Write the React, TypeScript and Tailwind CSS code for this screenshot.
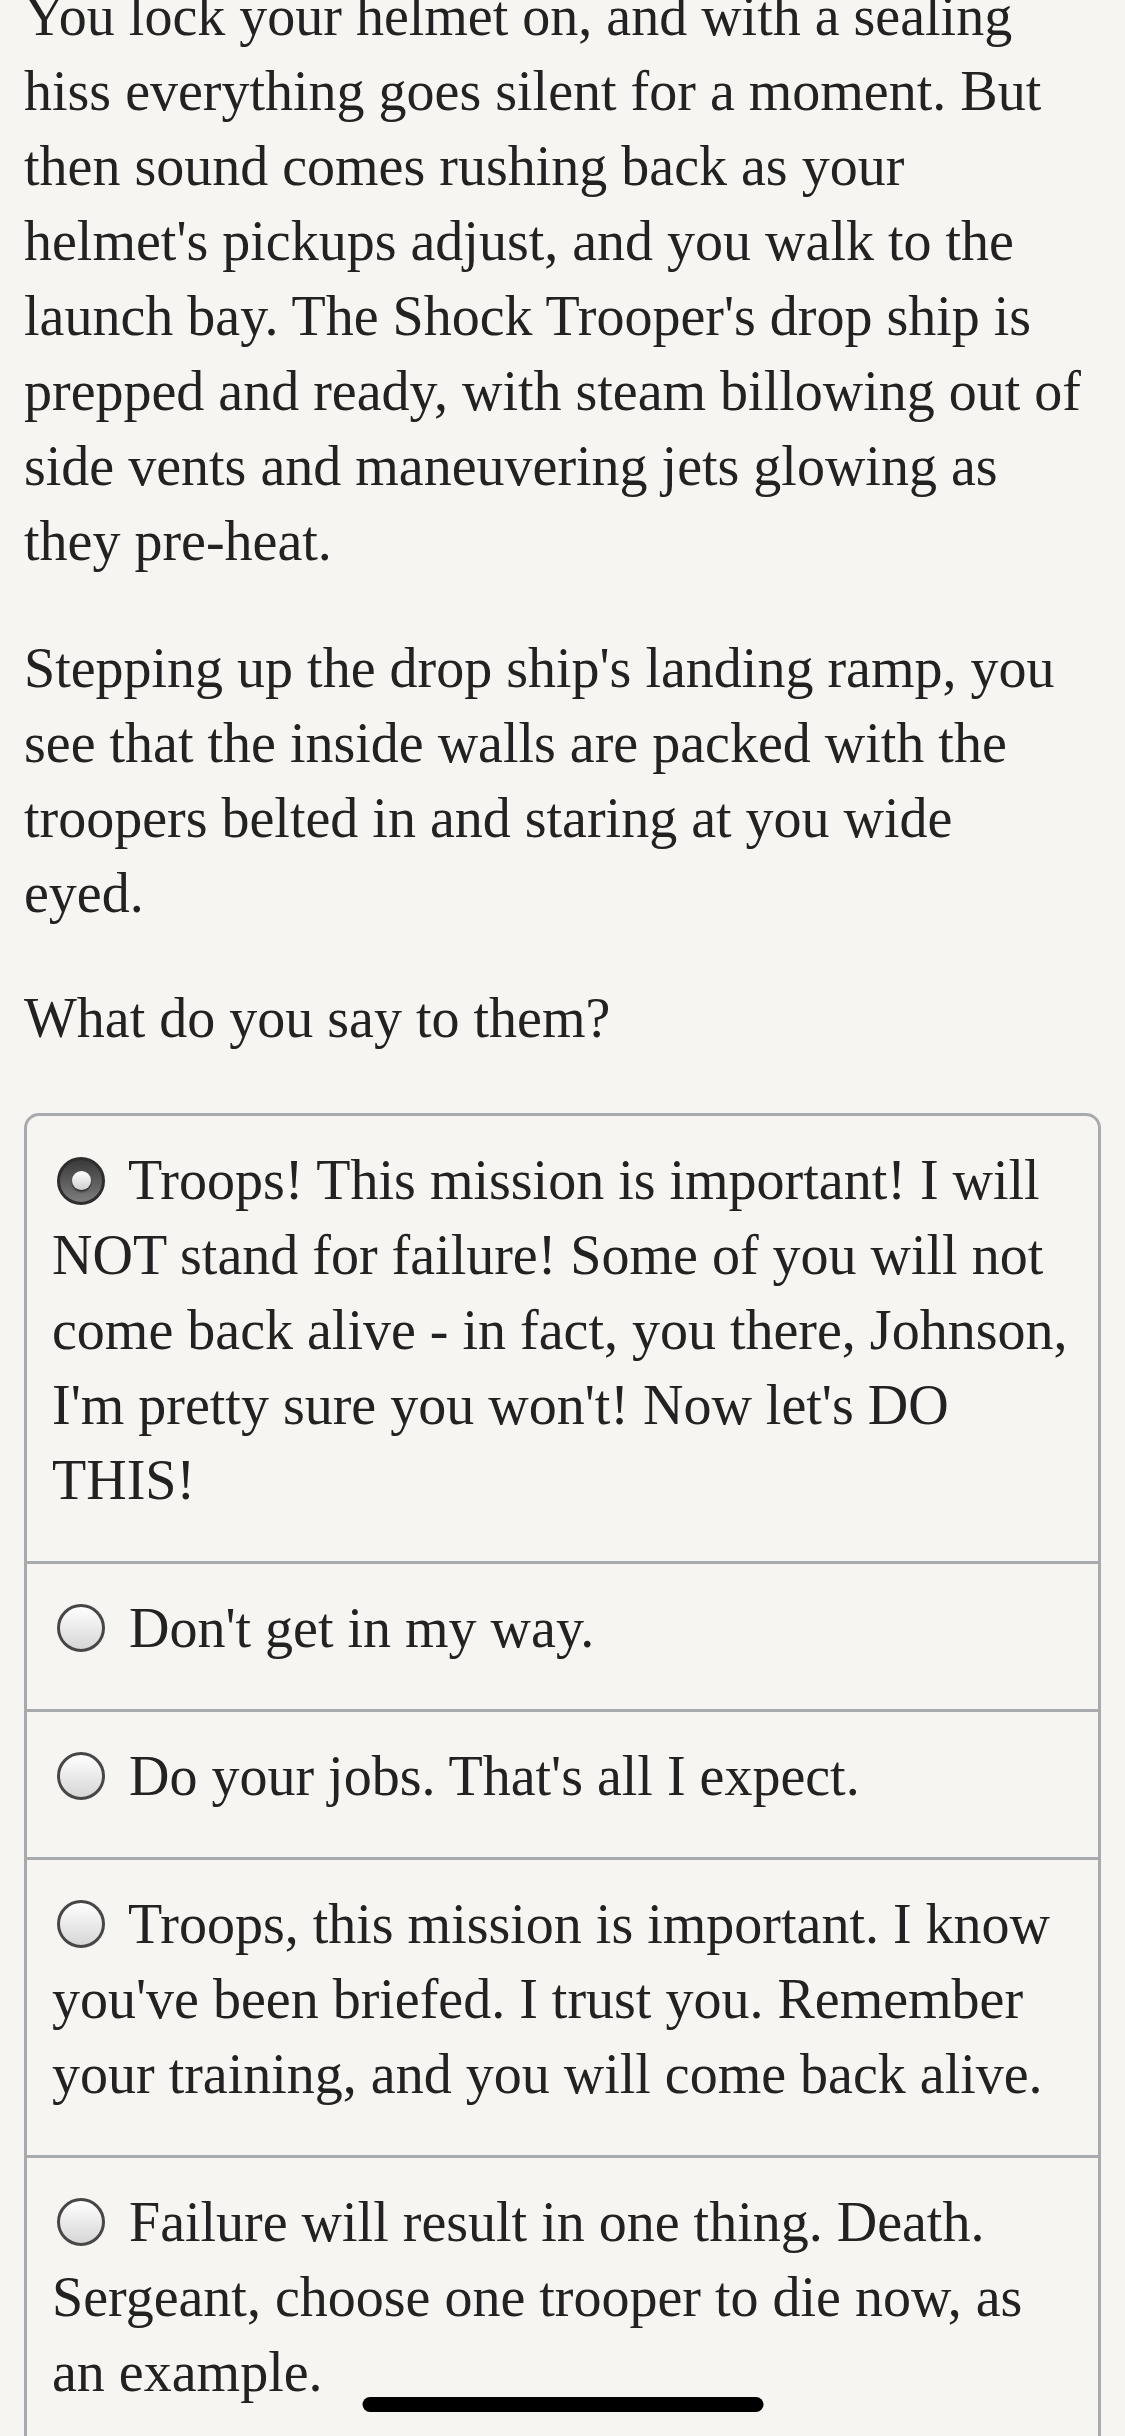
const intro = [
  "You lock your helmet on, and with a sealing\nhiss everything goes silent for a moment. But\nthen sound comes rushing back as your\nhelmet's pickups adjust, and you walk to the\nlaunch bay. The Shock Trooper's drop ship is\nprepped and ready, with steam billowing out of\nside vents and maneuvering jets glowing as\nthey pre-heat.",
  "Stepping up the drop ship's landing ramp, you\nsee that the inside walls are packed with the\ntroopers belted in and staring at you wide\neyed.",
];

const options = [
  "Troops! This mission is important! I will\nNOT stand for failure! Some of you will not\ncome back alive - in fact, you there, Johnson,\nI'm pretty sure you won't! Now let's DO\nTHIS!",
  "Don't get in my way.",
  "Do your jobs. That's all I expect.",
  "Troops, this mission is important. I know\nyou've been briefed. I trust you. Remember\nyour training, and you will come back alive.",
  "Failure will result in one thing. Death.\nSergeant, choose one trooper to die now, as\nan example.",
];

const Radio = ({ checked }: { checked: boolean }) =>
  checked ? (
    <span className="inline-block w-[48px] h-[48px] rounded-full border-[3px] border-[#2e2e2e] bg-linear-to-b from-[#3a3a3a] to-[#7e7e7e] align-[-6px] ml-[5px] mr-[10px]">
      <span className="block w-[19px] h-[19px] mx-auto mt-[11px] rounded-full bg-linear-to-b from-white to-[#cfcfcf] shadow-[0_2px_2px_rgba(0,0,0,0.55)]" />
    </span>
  ) : (
    <span className="inline-block w-[48px] h-[48px] rounded-full border-[3px] border-[#474747] bg-linear-to-b from-white to-[#d6d6d6] align-[-5px] ml-[5px] mr-[10px]" />
  );

export default function App() {
  const selected = 0;

  return (
    <div className="relative h-[2436px] overflow-hidden bg-[#f7f5f2] text-[#222] font-['Liberation_Serif',serif] text-[56px] leading-[75px]">
      <div className="-mt-[21px] px-[24px]">
        <p className="whitespace-pre-line mb-[52px]">{intro[0]}</p>
        <p className="whitespace-pre-line mb-[50px]">{intro[1]}</p>
        <p className="mb-[57px]">What do you say to them?</p>
      </div>

      {/* Choices */}
      <div className="mx-[24px] border-[3px] border-[#a8aaad] rounded-t-[15px]">
        {options.map((text, i) => (
          <div
            key={i}
            className={`px-[25px] pt-[27px] pb-[43px] whitespace-pre-line ${
              i < options.length - 1 ? "border-b-[3px] border-[#a8aaad]" : ""
            }`}
          >
            <Radio checked={i === selected} /> {text}
          </div>
        ))}
      </div>

      <div className="absolute bottom-[24px] left-1/2 -translate-x-1/2 w-[401px] h-[15px] rounded-full bg-black" />
    </div>
  );
}
